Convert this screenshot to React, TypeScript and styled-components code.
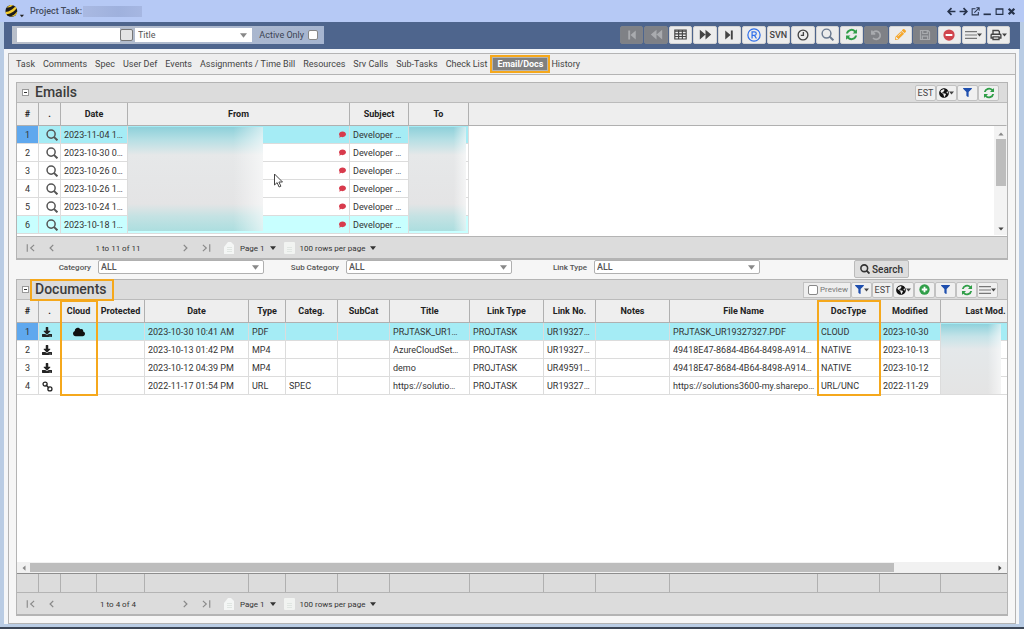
import React from 'react';
import styled, { createGlobalStyle, css } from 'styled-components';
import { FaCloud, FaDownload, FaFilter, FaComment, FaPencilAlt, FaGlobeAmericas } from 'react-icons/fa';

const Global = createGlobalStyle`
  * { box-sizing: border-box; }
  body { margin: 0; font-family: Roboto, "Liberation Sans", sans-serif; font-size: 9px; color: #333; background: #b9cce4; }
  button, input, select { font: inherit; color: inherit; margin: 0; }
  button { padding: 0; }
`;

const line = '#b4b4b4';
const accent = '#f5a81c';

/* ---------- window frame ---------- */

const Frame = styled.div`
  min-height: 100vh;
  display: flex;
  flex-direction: column;
  padding: 0 4px 3px;
  border-bottom: 2px solid #3c4656;
  background: #b9cce4;
`;

const TitleBar = styled.header`
  height: 22px;
  margin: 0 -4px;
  padding: 0 8px 0 5px;
  display: flex;
  align-items: center;
  background: #b6c9f5;
  font-weight: 500;
`;

const WindowTitle = styled.h1`
  margin: 0 1px 0 6px;
  font-size: 9px;
  font-weight: 500;
  color: #444c5c;
`;

const Redacted = styled.span`
  width: 59px;
  height: 11px;
  background: linear-gradient(90deg, #a9b9e2, #9fb1dd 60%, #a6b7e2);
`;

const WindowButtons = styled.div`
  margin-left: auto;
  display: flex;
  gap: 2px;
`;

const WindowButton = styled.button`
  width: 10px;
  height: 12px;
  border: 0;
  background: none;
  display: grid;
  place-items: center;
  color: #26324a;
`;

const ToolBar = styled.div`
  height: 27px;
  padding: 0 10px 2px 8px;
  display: flex;
  align-items: center;
  justify-content: space-between;
  background: #4e658d;
`;

const SearchBox = styled.div`
  width: 312px;
  height: 18px;
  padding: 0 6px 0 5px;
  display: flex;
  align-items: center;
  background: linear-gradient(90deg, #b9bfca, #a6b5d0);
`;

const SearchInput = styled.input`
  width: 103px;
  height: 14px;
  border: 0;
  padding: 0 3px;
  background: #fff;
`;

const SearchGo = styled.button`
  width: 13px;
  height: 12px;
  margin-right: 2px;
  border: 1px solid #777;
  border-radius: 2px;
  background: #e4e4e4;
`;

const ActiveOnly = styled.label`
  margin-left: auto;
  display: flex;
  align-items: center;
  gap: 4px;
  color: #3b4352;
`;

const Check = styled.input`
  appearance: none;
  width: 10px;
  height: 10px;
  border: 1px solid #888;
  border-radius: 2px;
  background: #fff;
`;

const ToolButtons = styled.div`
  width: 390px;
  display: flex;
  gap: 1px;
`;

const ToolButton = styled.button<{ $off?: boolean }>`
  flex: 1;
  height: 18px;
  border: 1px solid ${p => (p.$off ? '#7e8289' : '#d4d4d4')};
  border-radius: 2px;
  background: ${p => (p.$off ? '#7f8186' : '#ececec')};
  color: ${p => (p.$off ? '#a9abaf' : '#444')};
  display: flex;
  align-items: center;
  justify-content: center;
  font-weight: 500;
`;

/* ---------- drop-down ---------- */

const SelectWrap = styled.div<{ $w: number; $plain?: boolean }>`
  position: relative;
  width: ${p => p.$w}px;
  height: 14px;
  border: 1px solid ${p => (p.$plain ? '#fff' : '#b0b0b0')};
  border-radius: ${p => (p.$plain ? 0 : 2)}px;
  background: #fff;
  svg { position: absolute; right: 4px; top: 4px; color: #888; pointer-events: none; }
`;

const Select = styled.select`
  appearance: none;
  display: block;
  width: 100%;
  height: 12px;
  border: 0;
  padding: 0 2px;
  background: none;
  font-size: 9px;
  line-height: 12px;
  color: #555;
`;

/* ---------- main panel ---------- */

const Outer = styled.main`
  flex: 1;
  display: flex;
  flex-direction: column;
  margin-right: 1px;
  padding: 4px 3px 0 4px;
  background: #f4f6f8;
`;

const Panel = styled.div`
  flex: 1;
  display: flex;
  flex-direction: column;
  border: 1px solid ${line};
  background: #f6f6f6;
`;

const Tabs = styled.nav`
  height: 21px;
  padding: 0 7px;
  display: flex;
  align-items: center;
  gap: 8px;
  border-bottom: 1px solid ${line};
  background: #eee;
`;

const Tab = styled.a<{ $active?: boolean }>`
  color: #444;
  text-decoration: none;
  white-space: nowrap;
  ${p => p.$active && css`
    margin: 0 -7px 0 -5px;
    height: 18px;
    padding: 0 5px;
    border: 2px solid ${accent};
    background: #808080;
    box-shadow: inset 0 0 0 1px #b5b5b5;
    color: #fff;
    font-weight: 700;
    line-height: 14px;
  `}
`;

const Body = styled.div`
  flex: 1;
  min-width: 0;
  display: flex;
  flex-direction: column;
  padding: 7px;
`;

const Section = styled.section<{ $grow?: boolean }>`
  display: flex;
  flex-direction: column;
  min-width: 0;
  border: 1px solid ${line};
  border-bottom-width: 2px;
  background: #fff;
  ${p => p.$grow && 'flex: 1;'}
`;

const SectionBar = styled.div`
  height: 20px;
  display: flex;
  align-items: center;
  padding: 0 7px 0 5px;
  background: #dcdcdc;
  border-bottom: 1px solid #bbb;
`;

const Collapse = styled.button`
  width: 7px;
  height: 7px;
  border: 1px solid #999;
  background: #fff;
  display: grid;
  place-items: center;
  &::before { content: ''; width: 3px; height: 1px; background: #333; }
`;

const SectionTitle = styled.h2<{ $marked?: boolean }>`
  position: relative;
  z-index: 2;
  margin: 0 0 0 1px;
  height: 22px;
  padding: 0 5px 0 3px;
  border: 2px solid ${p => (p.$marked ? accent : 'transparent')};
  font-size: 14px;
  font-weight: 500;
  line-height: 17px;
  color: #3c3c3c;
`;

const SectionTools = styled.div<{ $inset?: boolean }>`
  margin-left: auto;
  margin-right: ${p => (p.$inset ? 1 : 2)}px;
  display: flex;
`;

const SmallButton = styled.button<{ $w?: number }>`
  width: ${p => p.$w || 21}px;
  height: 16px;
  border: 1px solid #c2c2c2;
  border-radius: 2px;
  background: #f0f0f0;
  display: flex;
  align-items: center;
  justify-content: center;
  color: #444;
`;

const Preview = styled.label`
  width: 48px;
  height: 16px;
  padding: 0 1px 0 4px;
  border: 1px solid #c2c2c2;
  background: #eee;
  display: flex;
  align-items: center;
  gap: 2px;
  font-size: 8px;
  color: #777;
`;

/* ---------- grids ---------- */

const GridView = styled.div<{ $h?: number }>`
  position: relative;
  overflow: hidden;
  ${p => (p.$h ? `height: ${p.$h}px;` : 'flex: 1;')}
  background: #fff;
`;

const Table = styled.table<{ $w?: number }>`
  width: ${p => (p.$w ? `${p.$w}px` : '100%')};
  table-layout: fixed;
  border-collapse: separate;
  border-spacing: 0;
`;

const Th = styled.th<{ $last?: boolean }>`
  position: relative;
  height: 23px;
  padding: 0;
  border-right: 1px solid ${p => (p.$last ? 'transparent' : '#b0b0b0')};
  border-bottom: 1px solid #b0b0b0;
  background: #eee;
  font-weight: 700;
  color: #222;
  text-align: center;
  white-space: nowrap;
`;

const Mark = styled.span<{ $h: number }>`
  position: absolute;
  z-index: 1;
  left: -1px;
  right: -2px;
  top: 0;
  height: ${p => p.$h}px;
  border: 2px solid ${accent};
`;

const rowColors = { plain: '#fff', selected: '#a5ecf5', tinted: '#c8ffff' };
type Tone = keyof typeof rowColors;

const Tr = styled.tr<{ $tone: Tone }>`
  td { background: ${p => rowColors[p.$tone]}; }
  td.num { background: ${p => (p.$tone === 'selected' ? '#5fa8ee' : rowColors[p.$tone])}; text-align: center; padding: 0; }
  td.icon { text-align: center; padding: 0; }
  td.right { text-align: right; padding: 0 2px 0 0; }
  td.left { text-align: left; padding: 0 0 0 3px; }
  td.rest { background: #fff; border-color: transparent; }
`;

const Td = styled.td`
  position: relative;
  height: 18px;
  padding: 0 0 0 3px;
  border-right: 1px solid #dcdcdc;
  border-bottom: 1px solid #dcdcdc;
  line-height: 16px;
  white-space: nowrap;
  > svg { vertical-align: middle; }
`;

const Clip = styled.span`
  display: block;
  overflow: hidden;
  text-overflow: ellipsis;
`;

const Flag = styled.span`
  display: flex;
  justify-content: flex-end;
  padding-right: 3px;
  color: #d83a4c;
`;

const Veil = styled.span<{ $w: number; $h: number; $tail?: boolean }>`
  position: absolute;
  z-index: 1;
  left: 0;
  top: 1px;
  width: ${p => p.$w}px;
  height: ${p => p.$h}px;
  background:
    linear-gradient(90deg, transparent 78%, rgba(255, 255, 255, 0.6)),
    ${p => (p.$tail
      ? 'linear-gradient(#8ed0da, #b5dfe4 12%, #e6e8e9 27%, #e4e4e5 74%, #c4e2e3 86%, #acdedf)'
      : 'linear-gradient(#8fd2dc, #c5e3e8 18%, #e4e8ea 36%, #e4e4e4)')};
`;

const VScroll = styled.div`
  position: absolute;
  right: 0;
  top: 23px;
  bottom: 1px;
  width: 13px;
  display: flex;
  flex-direction: column;
  align-items: center;
  padding: 5px 0 3px;
  background: #f3f3f3;
  i { width: 10px; height: 47px; margin: 2px 0 auto; background: #bdbdbd; }
`;

const HScroll = styled.div`
  height: 11px;
  display: flex;
  align-items: center;
  padding: 0 4px;
  background: #f1f1f1;
  i { width: 88%; height: 9px; margin: 0 auto 0 3px; background: #bdbdbd; }
`;

const Summary = styled.div`
  overflow: hidden;
  border-top: 1px solid #8d8d8d;
  background: #dcdcdc;
  td { height: 18px; padding: 0; border-right: 1px solid #b0b0b0; }
`;

const Pager = styled.div`
  height: 22px;
  display: flex;
  align-items: center;
  padding: 1px 0 0 3px;
  border-top: 1px solid #b4b4b4;
  background: #dcdcdc;
  font-size: 8px;
`;

const PageButton = styled.button`
  width: 21px;
  height: 16px;
  border: 0;
  background: none;
  color: #888;
  display: grid;
  place-items: center;
`;

const PageRange = styled.span`
  width: 112px;
  text-align: center;
`;

const PageMenu = styled.button`
  height: 16px;
  margin-left: 7px;
  border: 0;
  background: none;
  display: flex;
  align-items: center;
  gap: 5px;
`;

/* ---------- filters ---------- */

const Filters = styled.form`
  height: 19px;
  display: flex;
  align-items: flex-start;
`;

const Field = styled.label`
  width: 248px;
  display: flex;
  align-items: center;
  justify-content: flex-end;
  gap: 7px;
  font-size: 8px;
  color: #555;
  font-weight: 500;
`;

const SearchButton = styled.button`
  width: 55px;
  height: 18px;
  margin-left: 94px;
  border: 1px solid #bbb;
  border-radius: 2px;
  background: #dedede;
  display: flex;
  align-items: center;
  justify-content: center;
  gap: 2px;
  font-size: 10px;
  font-weight: 500;
`;

/* ---------- icons ---------- */

type IconProps = { children: React.ReactNode; s?: number; color?: string; w?: number };
const Stroke = ({ children, s = 12, color = 'currentColor', w = 2 }: IconProps) => (
  <svg width={s} height={s} viewBox="0 0 16 16" fill="none" stroke={color} strokeWidth={w} aria-hidden="true">{children}</svg>
);
const Solid = ({ children, s = 12, color = 'currentColor' }: IconProps) => (
  <svg width={s} height={s} viewBox="0 0 16 16" fill={color} aria-hidden="true">{children}</svg>
);
const Caret = ({ s = 7 }: { s?: number }) => (
  <svg width={s} height={s === 7 ? 5 : 4} viewBox="0 0 8 5" fill="currentColor" aria-hidden="true"><path d="M0 0h8L4 5z" /></svg>
);
const Magnifier = ({ s = 12, color, w = 2 }: { s?: number; color?: string; w?: number }) => (
  <Stroke s={s} color={color} w={w}><circle cx="6.8" cy="6.8" r="5.4" /><path d="M10.5 10.5l4.7 4.7" strokeWidth={w + 0.6} /></Stroke>
);
const Refresh = ({ s = 12 }: { s?: number }) => (
  <Solid s={s} color="#2f9e48">
    <path d="M1.2 6.8A7 7 0 0 1 13 3.1L14.7 1.4V6.8H9.3L11.3 4.8A4.7 4.7 0 0 0 3.6 6.8z" />
    <path d="M14.8 9.2A7 7 0 0 1 3 12.9L1.3 14.6V9.2H6.7L4.7 11.2A4.7 4.7 0 0 0 12.4 9.2z" />
  </Solid>
);
const Bars = () => <Stroke s={12} color="#777" w={1.6}><path d="M0 3.5h16M0 8h16M0 12.5h16" /></Stroke>;
const Link = () => (
  <Stroke s={11} color="#222" w={1.8}>
    <circle cx="4.500" cy="4.500" r="3" /><circle cx="11.500" cy="11.500" r="3" /><path d="M5.500 5.500l5 5" />
  </Stroke>
);
const Logo = () => (
  <svg width="19" height="16" viewBox="0 0 18 14" aria-hidden="true">
    <circle cx="6" cy="7" r="5.6" fill="#1c1c1c" />
    <path d="M.5 8C4 8 8 5 9.6 2.8L11 4.4C8.5 8 4 10.300 1 10z" fill="#f5cd2d" />
    <path d="M1.600 3.600C4 4 6.500 2.800 7.600 1.600L5 1.400z" fill="#f5cd2d" />
    <path d="M4 12.300C7 12 10 10 11.500 7.500L11 9.800 8.500 12z" fill="#f5cd2d" />
    <path d="M14 10.500h4l-2 2.500z" fill="#222" />
  </svg>
);
const PageGlyph = ({ folded }: { folded?: boolean }) => (
  <svg width="12" height="12" viewBox="0 0 12 12" aria-hidden="true">
    {folded
      ? <path d="M1 5l4-5h3l3 3v9H1z" fill="#f4f6f5" />
      : <rect x="1" y="0" width="11" height="12" rx="1" fill="#f1f3f1" />}
    <path d="M4 5.500h5M4 7.500h5M4 9.500h5" stroke="#e0e6e2" strokeWidth="1" />
  </svg>
);
const Cursor = styled.svg`
  position: absolute;
  left: 256px;
  top: 70px;
  z-index: 2;
`;

/* ---------- data ---------- */

const emailRows: { n: number; date: string; tone: Tone }[] = [
  { n: 1, date: '2023-11-04 1…', tone: 'selected' },
  { n: 2, date: '2023-10-30 0…', tone: 'plain' },
  { n: 3, date: '2023-10-26 0…', tone: 'plain' },
  { n: 4, date: '2023-10-26 1…', tone: 'plain' },
  { n: 5, date: '2023-10-24 1…', tone: 'plain' },
  { n: 6, date: '2023-10-18 1…', tone: 'tinted' },
];
const emailWidths = [22, 22, 67, 222, 59, 60];

const docHeads = ['#', '.', 'Cloud', 'Protected', 'Date', 'Type', 'Categ.', 'SubCat', 'Title', 'Link Type', 'Link No.', 'Notes', 'File Name', 'DocType', 'Modified', 'Last Mod.'];
const docWidths = [22, 22, 36, 48, 104, 37, 52, 52, 80, 74, 52, 74, 148, 62, 61, 90];
const docTotal = docWidths.reduce((a, b) => a + b, 0);
const docRows = [
  ['2023-10-30 10:41 AM', 'PDF', '', '', 'PRJTASK_UR1…', 'PROJTASK', 'UR19327…', '', 'PRJTASK_UR19327327.PDF', 'CLOUD', '2023-10-30'],
  ['2023-10-13 01:42 PM', 'MP4', '', '', 'AzureCloudSet…', 'PROJTASK', 'UR19327…', '', '49418E47-8684-4B64-8498-A914…', 'NATIVE', '2023-10-13'],
  ['2023-10-12 04:39 PM', 'MP4', '', '', 'demo', 'PROJTASK', 'UR49591…', '', '49418E47-8684-4B64-8498-A914…', 'NATIVE', '2023-10-12'],
  ['2022-11-17 01:54 PM', 'URL', 'SPEC', '', 'https://solutio…', 'PROJTASK', 'UR19327…', '', 'https://solutions3600-my.sharepo…', 'URL/UNC', '2022-11-29'],
];
const tabs = ['Task', 'Comments', 'Spec', 'User Def', 'Events', 'Assignments / Time Bill', 'Resources', 'Srv Calls', 'Sub-Tasks', 'Check List', 'Email/Docs', 'History'];

const Cols = ({ widths, rest }: { widths: number[]; rest?: boolean }) => (
  <colgroup>
    {widths.map((w, i) => <col key={i} style={{ width: w }} />)}
    {rest && <col />}
  </colgroup>
);

const PagerBar = ({ range }: { range: string }) => (
  <Pager>
    <PageButton aria-label="First page"><Stroke s={10} w={1.8}><path d="M2 2v12M13 3L7.500 8l5.500 5" /></Stroke></PageButton>
    <PageButton aria-label="Previous page"><Stroke s={10} w={2}><path d="M10 3L5 8l5 5" /></Stroke></PageButton>
    <PageRange>{range}</PageRange>
    <PageButton aria-label="Next page"><Stroke s={10} w={2}><path d="M6 3l5 5-5 5" /></Stroke></PageButton>
    <PageButton aria-label="Last page"><Stroke s={10} w={1.8}><path d="M14 2v12M3 3l5.500 5L3 13" /></Stroke></PageButton>
    <PageMenu><PageGlyph folded />Page 1 <Caret s={6} /></PageMenu>
    <PageMenu><PageGlyph />100 rows per page <Caret s={6} /></PageMenu>
  </Pager>
);

const Filter = ({ label }: { label: string }) => (
  <Field>
    {label}
    <SelectWrap $w={166}><Select><option>ALL</option></Select><Caret /></SelectWrap>
  </Field>
);

const GlobeButton = () => (
  <SmallButton aria-label="Time zone"><FaGlobeAmericas size={10} color="#111" /><Caret s={5} /></SmallButton>
);

export default function App() {
  return (
    <>
      <Global />
      <Frame>
        <TitleBar>
          <Logo />
          <WindowTitle>Project Task:</WindowTitle>
          <Redacted />
          <WindowButtons>
            <WindowButton aria-label="Back"><Stroke s={9} w={3}><path d="M15 8H3M8 2L2 8l6 6" /></Stroke></WindowButton>
            <WindowButton aria-label="Forward"><Stroke s={9} w={3}><path d="M1 8h12M8 2l6 6-6 6" /></Stroke></WindowButton>
            <WindowButton aria-label="Open in new window"><Stroke s={9} w={1.8}><path d="M8 3H2v11h11V9M6 10l8-8M9.500 1.500h5v5" /></Stroke></WindowButton>
            <WindowButton aria-label="Minimize"><Stroke s={9} w={3}><path d="M1 13h13" /></Stroke></WindowButton>
            <WindowButton aria-label="Maximize"><Stroke s={9} w={2}><path d="M2 3h12v10H2zM2 4h12" /></Stroke></WindowButton>
            <WindowButton aria-label="Close"><Stroke s={9} w={4}><path d="M3 3l10 10M13 3L3 13" /></Stroke></WindowButton>
          </WindowButtons>
        </TitleBar>

        <ToolBar>
          <SearchBox>
            <SearchInput aria-label="Search text" />
            <SearchGo aria-label="Look up" />
            <SelectWrap $w={117} $plain><Select aria-label="Search field"><option>Title</option></Select><Caret /></SelectWrap>
            <ActiveOnly>Active Only <Check type="checkbox" /></ActiveOnly>
          </SearchBox>
          <ToolButtons>
            <ToolButton $off aria-label="First"><Solid><path d="M3 2h2.500v12H3zM13 2v12L6 8z" /></Solid></ToolButton>
            <ToolButton $off aria-label="Previous"><Solid s={13}><path d="M8 2v12L1 8zM15 2v12L8 8z" /></Solid></ToolButton>
            <ToolButton aria-label="Grid"><Stroke s={13} w={1.400}><path d="M1 2.500h14v11H1zM1 4h14M1 7.200h14M1 10.400h14M5.700 3v10.500M10.300 3v10.500" /></Stroke></ToolButton>
            <ToolButton aria-label="Next"><Solid s={13}><path d="M1 2v12l7-6zM8 2v12l7-6z" /></Solid></ToolButton>
            <ToolButton aria-label="Last"><Solid><path d="M10.500 2H13v12h-2.500zM3 2v12l7-6z" /></Solid></ToolButton>
            <ToolButton aria-label="Registered">
              <Stroke s={14} color="#2f6fea" w={1.400}><circle cx="8" cy="8" r="7" /><path d="M5.800 12V4.300h2.700a2 2 0 0 1 0 4.200H5.800M8.500 8.500l2.300 3.500" /></Stroke>
            </ToolButton>
            <ToolButton>SVN</ToolButton>
            <ToolButton aria-label="Clock"><Stroke s={12} w={1.800}><circle cx="8" cy="8" r="6.500" /><path d="M8.500 4v4.500H5" /></Stroke></ToolButton>
            <ToolButton aria-label="Find"><Magnifier s={13} color="#6b7a90" w={1.800} /></ToolButton>
            <ToolButton aria-label="Refresh"><Refresh s={13} /></ToolButton>
            <ToolButton $off aria-label="Undo"><Stroke s={12} w={2.200}><path d="M2.500 2v4.500H7M3 6.300A5.500 5.500 0 1 1 4 12" /></Stroke></ToolButton>
            <ToolButton aria-label="Edit"><FaPencilAlt size={11} color="#f5a72c" /></ToolButton>
            <ToolButton $off aria-label="Save"><Stroke s={12} w={1.600}><path d="M2 2h10l2 2v10H2zM5 2v4h6V2M4.500 14V9.500h7V14" /></Stroke></ToolButton>
            <ToolButton aria-label="Delete"><Stroke s={12} color="#d0444c" w={0}><circle cx="8" cy="8" r="7.500" fill="#d0444c" /><path d="M3.500 8h9" stroke="#fff" strokeWidth="2.600" /></Stroke></ToolButton>
            <ToolButton aria-label="Menu"><Bars /><Caret s={5} /></ToolButton>
            <ToolButton aria-label="Print"><Stroke s={12} w={1.800}><path d="M4 7V2h7l1.500 1.500V7M4 12H1.500V8q0-1 1-1h11q1 0 1 1v4H12M4 10.500h8V14H4z" /></Stroke><Caret s={5} /></ToolButton>
          </ToolButtons>
        </ToolBar>

        <Outer>
          <Panel>
            <Tabs>
              {tabs.map(t => <Tab key={t} href="#" $active={t === 'Email/Docs'}>{t}</Tab>)}
            </Tabs>
            <Body>
              <Section>
                <SectionBar>
                  <Collapse aria-label="Collapse emails" />
                  <SectionTitle>Emails</SectionTitle>
                  <SectionTools $inset>
                    <SmallButton>EST</SmallButton>
                    <GlobeButton />
                    <SmallButton aria-label="Filter"><FaFilter size={9} color="#1f4fae" /></SmallButton>
                    <SmallButton aria-label="Refresh emails"><Refresh s={12} /></SmallButton>
                  </SectionTools>
                </SectionBar>
                <GridView $h={133}>
                  <Table>
                    <Cols widths={emailWidths} rest />
                    <thead>
                      <tr>
                        {['#', '.', 'Date', 'From', 'Subject', 'To'].map(h => <Th key={h}>{h}</Th>)}
                        <Th $last />
                      </tr>
                    </thead>
                    <tbody>
                      {emailRows.map(r => (
                        <Tr key={r.n} $tone={r.tone}>
                          <Td className="num">{r.n}</Td>
                          <Td className="right"><Magnifier s={12} color="#555" w={2} /></Td>
                          <Td>{r.date}</Td>
                          <Td>
                            {r.n === 1 && <Veil $w={135} $h={104} $tail />}
                            <Flag><FaComment size={7} /></Flag>
                          </Td>
                          <Td>Developer …</Td>
                          <Td>{r.n === 1 && <Veil $w={57} $h={104} $tail />}</Td>
                          <Td className="rest" />
                        </Tr>
                      ))}
                    </tbody>
                  </Table>
                  <Cursor width="11" height="16" viewBox="0 0 11 16" aria-hidden="true">
                    <path d="M1.500 1v11l2.600-2.400 2 4.400 1.800-.8-2-4.200H9.500z" fill="#fff" stroke="#444" />
                  </Cursor>
                  <VScroll>
                    <Solid s={6} color="#888"><path d="M1 12h14L8 4z" /></Solid>
                    <i />
                    <Solid s={6} color="#444"><path d="M1 4h14l-7 8z" /></Solid>
                  </VScroll>
                </GridView>
                <PagerBar range="1 to 11 of 11" />
              </Section>

              <Filters onSubmit={e => e.preventDefault()}>
                <Filter label="Category" />
                <Filter label="Sub Category" />
                <Filter label="Link Type" />
                <SearchButton><Magnifier s={10} w={2.500} />Search</SearchButton>
              </Filters>

              <Section $grow>
                <SectionBar>
                  <Collapse aria-label="Collapse documents" />
                  <SectionTitle $marked>Documents</SectionTitle>
                  <SectionTools>
                    <Preview><Check type="checkbox" />Preview</Preview>
                    <SmallButton aria-label="Saved filters"><FaFilter size={9} color="#1f4fae" /><Caret s={5} /></SmallButton>
                    <SmallButton>EST</SmallButton>
                    <GlobeButton />
                    <SmallButton aria-label="Add document">
                      <Stroke s={11} w={0}><circle cx="8" cy="8" r="7.500" fill="#2f9e48" /><path d="M8 4v8M4 8h8" stroke="#fff" strokeWidth="2.600" /></Stroke>
                    </SmallButton>
                    <SmallButton aria-label="Filter documents"><FaFilter size={9} color="#1f4fae" /></SmallButton>
                    <SmallButton aria-label="Refresh documents"><Refresh s={12} /></SmallButton>
                    <SmallButton aria-label="More"><Bars /><Caret s={5} /></SmallButton>
                  </SectionTools>
                </SectionBar>
                <GridView>
                  <Table $w={docTotal}>
                    <Cols widths={docWidths} />
                    <thead>
                      <tr>
                        {docHeads.map(h => (
                          <Th key={h}>
                            {h}
                            {(h === 'Cloud' || h === 'DocType') && <Mark $h={96} />}
                          </Th>
                        ))}
                      </tr>
                    </thead>
                    <tbody>
                      {docRows.map((r, i) => (
                        <Tr key={i} $tone={i === 0 ? 'selected' : 'plain'}>
                          <Td className="num">{i + 1}</Td>
                          <Td className="left">{i < 3 ? <FaDownload size={10} color="#222" /> : <Link />}</Td>
                          <Td className="icon">{i === 0 && <FaCloud size={12} color="#111" />}</Td>
                          <Td />
                          {r.map((c, j) => <Td key={j}><Clip>{c}</Clip></Td>)}
                          <Td>{i === 0 && <Veil $w={60} $h={70} />}</Td>
                        </Tr>
                      ))}
                    </tbody>
                  </Table>
                </GridView>
                <HScroll>
                  <Solid s={6} color="#888"><path d="M12 1v14L4 8z" /></Solid>
                  <i />
                  <Solid s={6} color="#444"><path d="M4 1v14l8-7z" /></Solid>
                </HScroll>
                <Summary>
                  <Table $w={docTotal}>
                    <Cols widths={docWidths} />
                    <tbody><tr>{docHeads.map(h => <td key={h} />)}</tr></tbody>
                  </Table>
                </Summary>
                <PagerBar range="1 to 4 of 4" />
              </Section>
            </Body>
          </Panel>
        </Outer>
      </Frame>
    </>
  );
}
